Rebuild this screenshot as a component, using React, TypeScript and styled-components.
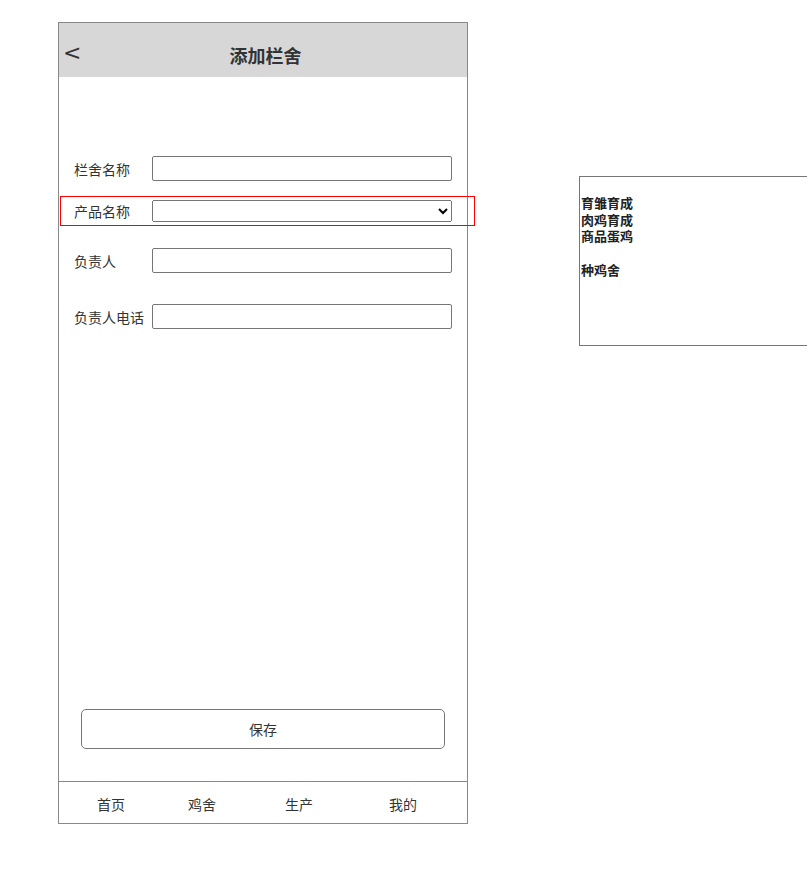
import React from "react";
import styled, { createGlobalStyle } from "styled-components";

const GlobalStyle = createGlobalStyle`
  html, body {
    margin: 0;
    padding: 0;
    background: #ffffff;
    overflow: hidden;
  }
  body {
    font-family: "Noto Sans CJK SC", "Noto Sans", sans-serif;
    color: #333333;
  }
  * { box-sizing: border-box; }
`;

const Page = styled.div`
  display: flex;
  align-items: flex-start;
  gap: 111px;
  padding: 22px 0 0 58px;
  width: 807px;
  height: 882px;
  overflow: hidden;
`;

const Phone = styled.div`
  flex-shrink: 0;
  width: 410px;
  height: 802px;
  border: 1px solid #888888;
  display: flex;
  flex-direction: column;
`;

const Header = styled.header`
  height: 54px;
  flex-shrink: 0;
  background: #d7d7d7;
  display: grid;
  grid-template-columns: 1fr auto 1fr;
  align-items: center;
  padding: 10px 1px 0 4px;
`;

const Back = styled.span`
  justify-self: start;
  font-family: "DejaVu Sans", sans-serif;
  font-size: 22px;
  line-height: 1;
  color: #333333;
  margin-bottom: 5px;
`;

const Title = styled.h1`
  margin: 0 0 0 2px;
  font-size: 18px;
  font-weight: 700;
  color: #333333;
  line-height: 1;
`;

const Form = styled.div`
  flex: 1;
  display: flex;
  flex-direction: column;
  align-items: flex-start;
`;

const Row = styled.div<{ $gap: number; $active?: boolean }>`
  margin-top: ${(p) => p.$gap}px;
  margin-left: 1px;
  width: 415px;
  flex-shrink: 0;
  display: flex;
  align-items: center;
  padding: 3px 0 3px 13px;
  border: 1px solid ${(p) => (p.$active ? "#ff0000" : "transparent")};
`;

const Label = styled.label`
  width: 78px;
  flex-shrink: 0;
  font-size: 14px;
  line-height: 20px;
  color: #333333;
  white-space: nowrap;
`;

const TextInput = styled.input`
  width: 300px;
  height: 25px;
  margin: 0;
  border: 1px solid #767676;
  border-radius: 2px;
  padding: 0 4px;
  font-size: 13px;
  font-family: inherit;
  background: #ffffff;
`;

const Select = styled.select`
  width: 300px;
  height: 22px;
  margin: 0;
  font-size: 13px;
  font-family: inherit;
  color: #000000;
`;

const SaveButton = styled.button`
  flex-shrink: 0;
  margin: 0 22px 32px 22px;
  height: 40px;
  border: 1px solid #777777;
  border-radius: 5px;
  background: #ffffff;
  font-family: inherit;
  font-size: 14px;
  color: #333333;
  cursor: pointer;
`;

const Nav = styled.nav`
  flex-shrink: 0;
  height: 42px;
  border-top: 1px solid #888888;
  display: flex;
  align-items: center;
  padding: 3px 0 0 38px;
`;

const NavItem = styled.a<{ $offset: number }>`
  margin-left: ${(p) => p.$offset}px;
  font-size: 14px;
  line-height: 20px;
  color: #333333;
  text-decoration: none;
  white-space: nowrap;
`;

const OptionPanel = styled.div`
  flex-shrink: 0;
  margin-top: 154px;
  width: 260px;
  height: 170px;
  border: 1px solid #777777;
  padding: 18px 0 0 1px;
  font-size: 13px;
  font-weight: 700;
  line-height: 16.5px;
  color: #222222;
`;

const OptionLine = styled.div<{ $space?: number }>`
  margin-top: ${(p) => p.$space ?? 0}px;
  white-space: nowrap;
`;

const rows = [
  { label: "栏舍名称", gap: 75, kind: "input" },
  { label: "产品名称", gap: 11, kind: "select" },
  { label: "负责人", gap: 18, kind: "input" },
  { label: "负责人电话", gap: 23, kind: "input" },
];

const tabs = [
  { name: "首页", offset: 0 },
  { name: "鸡舍", offset: 63 },
  { name: "生产", offset: 69 },
  { name: "我的", offset: 76 },
];

export default function App() {
  return (
    <>
      <GlobalStyle />
      <Page>
        <Phone>
          <Header>
            <Back>&lt;</Back>
            <Title>添加栏舍</Title>
            <span />
          </Header>
          <Form>
            {rows.map((r) => (
              <Row key={r.label} $gap={r.gap} $active={r.kind === "select"}>
                <Label>{r.label}</Label>
                {r.kind === "select" ? (
                  <Select defaultValue="">
                    <option value=""></option>
                    <option>育雏育成</option>
                    <option>肉鸡育成</option>
                    <option>商品蛋鸡</option>
                    <option>种鸡舍</option>
                  </Select>
                ) : (
                  <TextInput type="text" />
                )}
              </Row>
            ))}
          </Form>
          <SaveButton type="button">保存</SaveButton>
          <Nav>
            {tabs.map((t) => (
              <NavItem key={t.name} $offset={t.offset}>
                {t.name}
              </NavItem>
            ))}
          </Nav>
        </Phone>
        <OptionPanel>
          <OptionLine>育雏育成</OptionLine>
          <OptionLine>肉鸡育成</OptionLine>
          <OptionLine>商品蛋鸡</OptionLine>
          <OptionLine $space={17}>种鸡舍</OptionLine>
        </OptionPanel>
      </Page>
    </>
  );
}
